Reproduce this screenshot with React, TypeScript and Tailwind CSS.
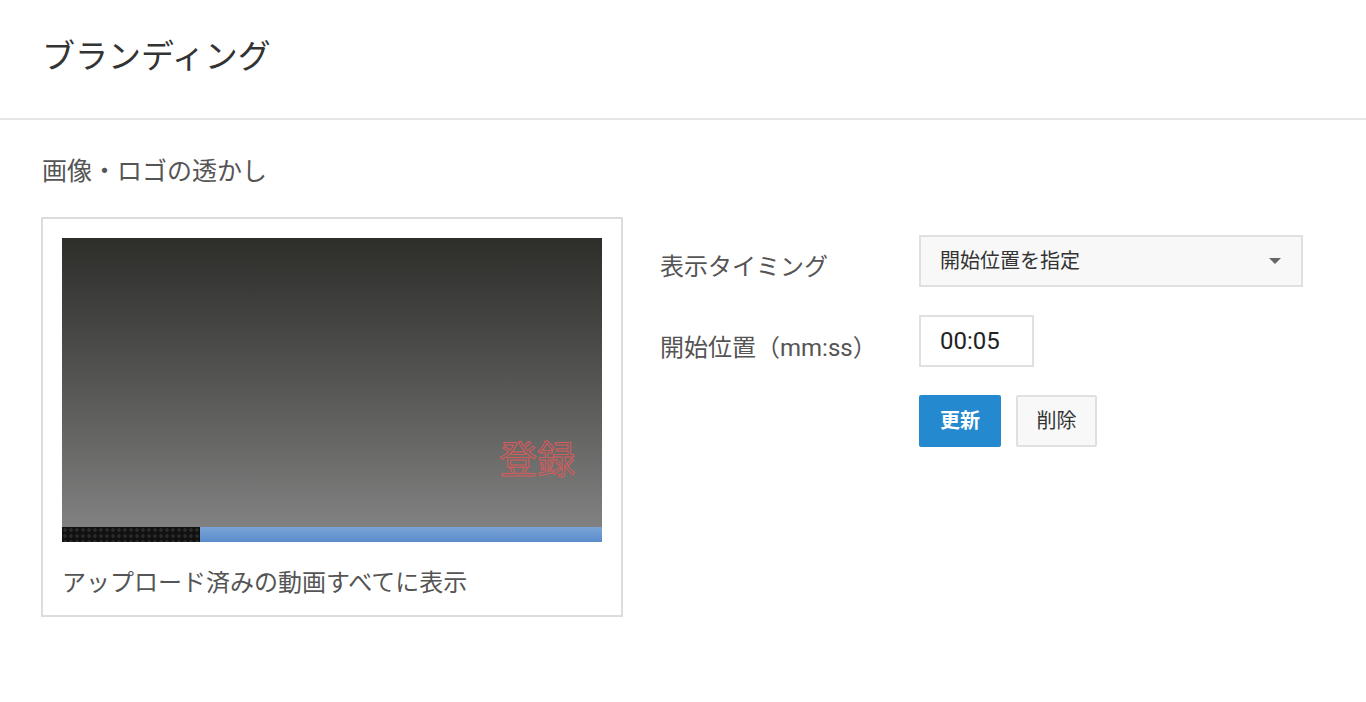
import React from "react";

export default function App() {
  const font = {
    fontFamily: '"Roboto", "Noto Sans CJK JP", sans-serif',
  };
  return (
    <div className="w-[1366px] h-[702px] bg-white overflow-hidden" style={font}>
      <div className="h-[120px] border-b-2 border-[#e5e5e5] flex items-center pl-[42px]">
        <h1 className="text-[33px] leading-none text-[#333] -mt-[6px]">ブランディング</h1>
      </div>
      <div className="pl-[41px] pt-[38px]">
        <h2 className="text-[25px] leading-[28px] text-[#555] ml-[1px]">画像・ロゴの透かし</h2>
        <div className="flex mt-[31px]">
          <div className="w-[582px] h-[400px] border-2 border-[#dcdcdc] pt-[19px] px-[19px]">
            <div className="w-[540px] h-[304px] flex flex-col">
              <div className="flex-1 bg-gradient-to-b from-[#2d2d2a] to-[#818181] flex items-end justify-end pr-[27px] pb-[48px]">
                <span className="text-[38px] leading-none text-transparent [-webkit-text-stroke:1px_#d65c5c]">
                  登録
                </span>
              </div>
              <div className="h-[15px] flex">
                <div className="w-[138px] bg-[#111] bg-[radial-gradient(circle,#2a2a2a_1.5px,transparent_2px)] bg-[length:6px_6px]" />
                <div className="flex-1 bg-gradient-to-b from-[#7aa4d6] to-[#5c8ccc]" />
              </div>
            </div>
            <p className="mt-[26px] text-[24px] leading-[30px] text-[#555]">
              アップロード済みの動画すべてに表示
            </p>
          </div>
          <div className="ml-[37px] mt-[18px] flex flex-col">
            <div className="flex items-center">
              <div className="w-[259px] text-[24px] text-[#555] pt-[12px]">表示タイミング</div>
              <div className="w-[384px] h-[52px] bg-[#f8f8f8] border-2 border-[#e0e0e0] flex items-center pl-[19px] pr-[20px] justify-between">
                <span className="text-[20px] text-[#333]">開始位置を指定</span>
                <span className="w-0 h-0 border-l-[6px] border-r-[6px] border-t-[6px] border-l-transparent border-r-transparent border-t-[#666]" />
              </div>
            </div>
            <div className="flex items-center mt-[28px]">
              <div className="w-[259px] text-[24px] text-[#555] pt-[13px]">開始位置（mm:ss）</div>
              <div className="w-[115px] h-[52px] bg-white border-2 border-[#e0e0e0] flex items-center pl-[19px]">
                <span className="text-[24px] text-[#222]">00:05</span>
              </div>
            </div>
            <div className="flex mt-[28px] ml-[259px] gap-[15px]">
              <button className="w-[82px] h-[52px] bg-[#2589cf] rounded-[2px] text-white text-[20px] font-bold">
                更新
              </button>
              <button className="w-[81px] h-[52px] bg-[#f8f8f8] border-2 border-[#e0e0e0] rounded-[2px] text-[#333] text-[20px]">
                削除
              </button>
            </div>
          </div>
        </div>
      </div>
    </div>
  );
}
